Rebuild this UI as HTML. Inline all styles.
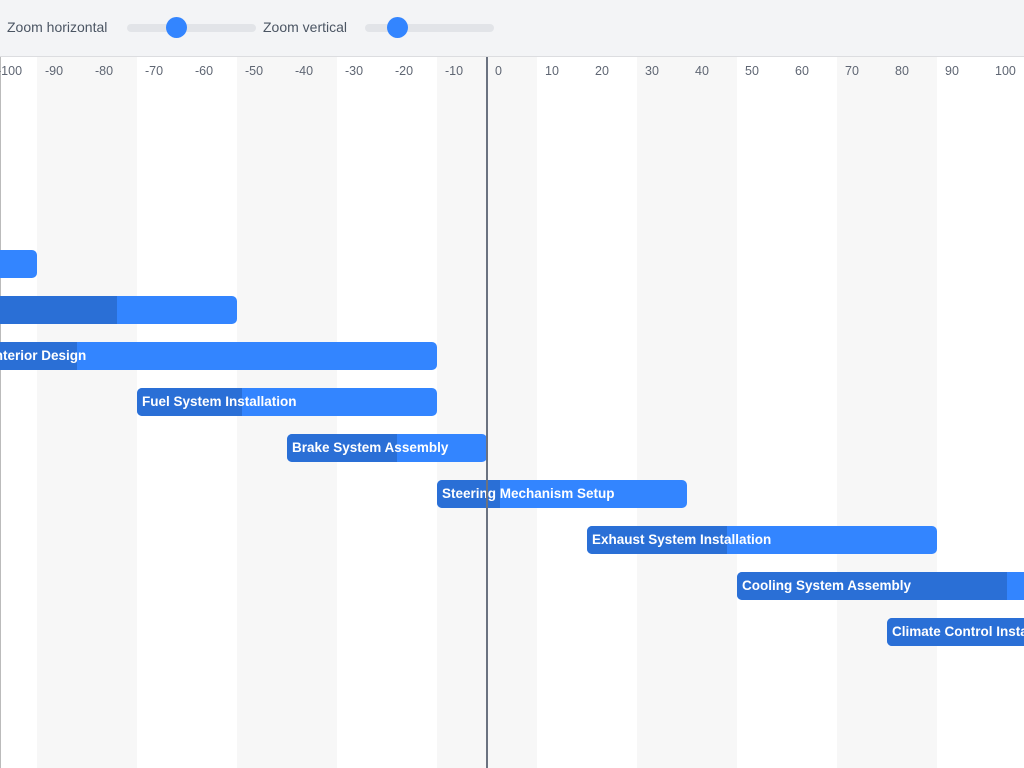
<!DOCTYPE html>
<html><head><meta charset="utf-8"><style>
*{margin:0;padding:0;box-sizing:border-box}
body{width:1024px;height:768px;overflow:hidden;background:#fff;font-family:"Liberation Sans",sans-serif;position:relative}
.tb{position:absolute;left:0;top:0;width:1024px;height:57px;background:#f3f4f6;border-bottom:1px solid #dcdde0}
.lbl{position:absolute;top:19px;font-size:14px;color:#4b5563}
.trk{position:absolute;top:24px;height:8px;width:129px;border-radius:4px;background:#e2e4e8}
.knob{position:absolute;top:17px;width:21px;height:21px;border-radius:50%;background:#3385ff}
.stripe{position:absolute;top:57px;height:711px;width:100px;background:#f7f7f7}
.tick{position:absolute;top:64px;font-size:12.5px;color:#5f6673}
.bar{position:absolute;height:28px;background:#3385ff;border-radius:5px;overflow:hidden;color:#fff;font-size:13.5px;font-weight:bold;line-height:28px;white-space:nowrap}
.bar .p{position:absolute;left:0;top:0;bottom:0;background:#2a6fd6}
.bar span{position:relative;padding-left:5px}
</style></head><body>
<div class="tb">
<div class="lbl" style="left:7px">Zoom horizontal</div>
<div class="trk" style="left:127px"></div><div class="knob" style="left:166px"></div>
<div class="lbl" style="left:263px">Zoom vertical</div>
<div class="trk" style="left:365px"></div><div class="knob" style="left:387px"></div>
</div>
<div class="stripe" style="left:37px"></div>
<div class="stripe" style="left:237px"></div>
<div class="stripe" style="left:437px"></div>
<div class="stripe" style="left:637px"></div>
<div class="stripe" style="left:837px"></div>
<div style="position:absolute;left:0;top:57px;width:1px;height:711px;background:#bbb"></div>
<div class="tick" style="left:-3px">-100</div>
<div class="tick" style="left:45px">-90</div>
<div class="tick" style="left:95px">-80</div>
<div class="tick" style="left:145px">-70</div>
<div class="tick" style="left:195px">-60</div>
<div class="tick" style="left:245px">-50</div>
<div class="tick" style="left:295px">-40</div>
<div class="tick" style="left:345px">-30</div>
<div class="tick" style="left:395px">-20</div>
<div class="tick" style="left:445px">-10</div>
<div class="tick" style="left:495px">0</div>
<div class="tick" style="left:545px">10</div>
<div class="tick" style="left:595px">20</div>
<div class="tick" style="left:645px">30</div>
<div class="tick" style="left:695px">40</div>
<div class="tick" style="left:745px">50</div>
<div class="tick" style="left:795px">60</div>
<div class="tick" style="left:845px">70</div>
<div class="tick" style="left:895px">80</div>
<div class="tick" style="left:945px">90</div>
<div class="tick" style="left:995px">100</div>

<div class="bar" style="left:-20px;top:250px;width:57px"></div>
<div class="bar" style="left:-20px;top:296px;width:257px"><div class="p" style="width:137px"></div></div>
<div class="bar" style="left:-9px;top:342px;width:446px"><div class="p" style="width:86px"></div><span style="padding-left:0">Interior Design</span></div>
<div class="bar" style="left:137px;top:388px;width:300px"><div class="p" style="width:105px"></div><span>Fuel System Installation</span></div>
<div class="bar" style="left:287px;top:434px;width:200px"><div class="p" style="width:110px"></div><span>Brake System Assembly</span></div>
<div class="bar" style="left:437px;top:480px;width:250px"><div class="p" style="width:63px"></div><span>Steering Mechanism Setup</span></div>
<div class="bar" style="left:587px;top:526px;width:350px"><div class="p" style="width:140px"></div><span>Exhaust System Installation</span></div>
<div class="bar" style="left:737px;top:572px;width:320px"><div class="p" style="width:270px"></div><span>Cooling System Assembly</span></div>
<div class="bar" style="left:887px;top:618px;width:300px"><div class="p" style="width:300px"></div><span>Climate Control Installation</span></div>

<div style="position:absolute;left:486px;top:57px;width:2px;height:711px;background:#6b7280"></div>
</body></html>
